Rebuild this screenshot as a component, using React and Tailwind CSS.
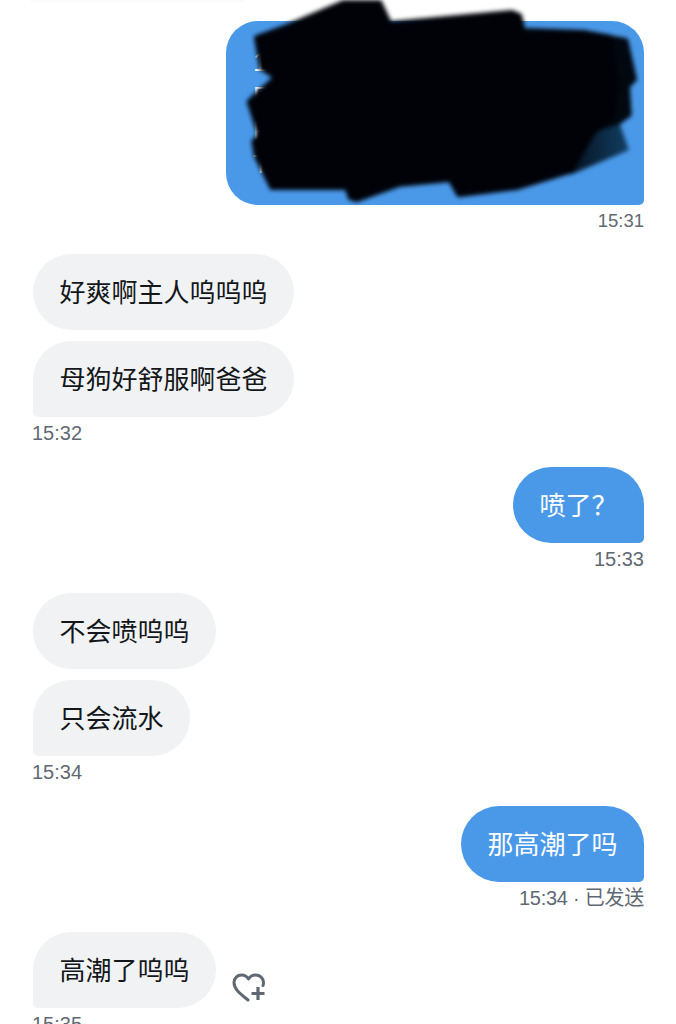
const font = { fontFamily: '"Liberation Sans","Noto Sans CJK SC",sans-serif' };

function Bubble({ me, tail, children }) {
  if (me) {
    return (
      <div className="flex h-[76px] items-center rounded-[38px] rounded-br-[5px] bg-[#4a99e9] px-[26.5px] pt-[3px] text-[26px] leading-[37px] text-white">
        {children}
      </div>
    );
  }
  return (
    <div className={tail
      ? "flex h-[76px] items-center rounded-[38px] rounded-bl-[5px] bg-[#f0f2f4] px-[26.5px] pt-[3px] text-[26px] leading-[37px] text-[#14171a]"
      : "flex h-[76px] items-center rounded-[38px] bg-[#f0f2f4] px-[26.5px] pt-[3px] text-[26px] leading-[37px] text-[#14171a]"}>
      {children}
    </div>
  );
}

function Time({ me, children }) {
  return (
    <div className={me
      ? "mt-1 h-6 text-right text-[20px] leading-6 text-[#5f6973]"
      : "mt-1 -ml-px h-6 text-[20px] leading-6 text-[#5f6973]"}>
      {children}
    </div>
  );
}

function HeartPlus() {
  return (
    <svg width="34" height="30" viewBox="0 0 34 30" fill="none" stroke="#5f6973" strokeWidth="3" className="mb-[5px] ml-4 shrink-0">
      <path d="M16 27C10 22 2 17 2 9.5C2 5 5.5 2 9.5 2C12.5 2 15 3.5 16.5 6C18 3.5 20.5 2 23.5 2C28 2 31.5 5 31.5 9.5C31.5 10.5 31.3 11.5 31 12.5" strokeLinecap="round" strokeLinejoin="round" />
      <path d="M26 14V27M19.5 20.5H32.5" strokeWidth="3.2" />
    </svg>
  );
}

export default function App() {
  return (
    <div style={font} className="relative h-[1024px] w-[676px] overflow-hidden bg-white pl-[33px] pr-8 pt-[21px]">
      <div className="absolute left-[30px] top-0 h-[2px] w-[215px] bg-[#fbfbfc]" />

      <div className="mb-[21px] flex flex-col items-end">
        <div className="h-[184px] w-[418px] overflow-hidden rounded-[32px] rounded-br-[5px] bg-[#4a99e9] px-[27px] pt-6 text-[26px] leading-[34px] text-white">
          <div>1</div>
          <div>F</div>
          <div>F</div>
          <div>T</div>
        </div>
        <div className="mt-1 h-6 text-right text-[18.5px] leading-6 text-[#5f6973]">15:31</div>
      </div>

      <div className="mb-[22px] flex flex-col items-start gap-[11px]">
        <Bubble>好爽啊主人呜呜呜</Bubble>
        <div>
          <Bubble tail>母狗好舒服啊爸爸</Bubble>
          <Time>15:32</Time>
        </div>
      </div>

      <div className="mb-[22px] flex flex-col items-end">
        <Bubble me>喷了？</Bubble>
        <Time me>15:33</Time>
      </div>

      <div className="mb-[22px] flex flex-col items-start gap-[11px]">
        <Bubble>不会喷呜呜</Bubble>
        <div>
          <Bubble tail>只会流水</Bubble>
          <Time>15:34</Time>
        </div>
      </div>

      <div className="mb-[22px] flex flex-col items-end">
        <Bubble me>那高潮了吗</Bubble>
        <div className="mt-1 h-6 text-right text-[20px] leading-6 tracking-[-0.25px] text-[#5f6973]">15:34 · 已发送</div>
      </div>

      <div>
        <div className="flex items-end">
          <Bubble tail>高潮了呜呜</Bubble>
          <HeartPlus />
        </div>
        <Time>15:35</Time>
      </div>

      <svg width="476" height="240" viewBox="0 0 1428 720" className="absolute left-[200px] top-0 blur-[2px]">
        <defs>
          <linearGradient id="fade" x1="1050" y1="0" x2="1290" y2="0" gradientUnits="userSpaceOnUse">
            <stop offset="0" stopColor="#000208" />
            <stop offset="1" stopColor="#123f63" />
          </linearGradient>
        </defs>
        <path fill="url(#fade)" stroke="url(#fade)" strokeWidth="8" strokeLinejoin="round" d="M1050 380L1255 372L1282 448L1115 518L1050 520Z" />
        <path fill="#020810" stroke="#020810" strokeWidth="10" strokeLinejoin="round" d="M1150 96L1280 120L1306 238L1285 260L1290 345L1258 368L1150 400Z" />
        <path fill="#000208" stroke="#000208" strokeWidth="12" strokeLinejoin="round" d="M266 76L430 6L540 6L570 70L936 36L960 46L970 90L1150 96L1230 110L1250 240L1240 350L1180 400L1112 515L950 564L776 586L750 540L600 554L470 600L450 594L440 564L215 564L168 468L160 425L178 405L146 305L178 275L226 232L184 205L168 112Z" />
      </svg>
    </div>
  );
}
